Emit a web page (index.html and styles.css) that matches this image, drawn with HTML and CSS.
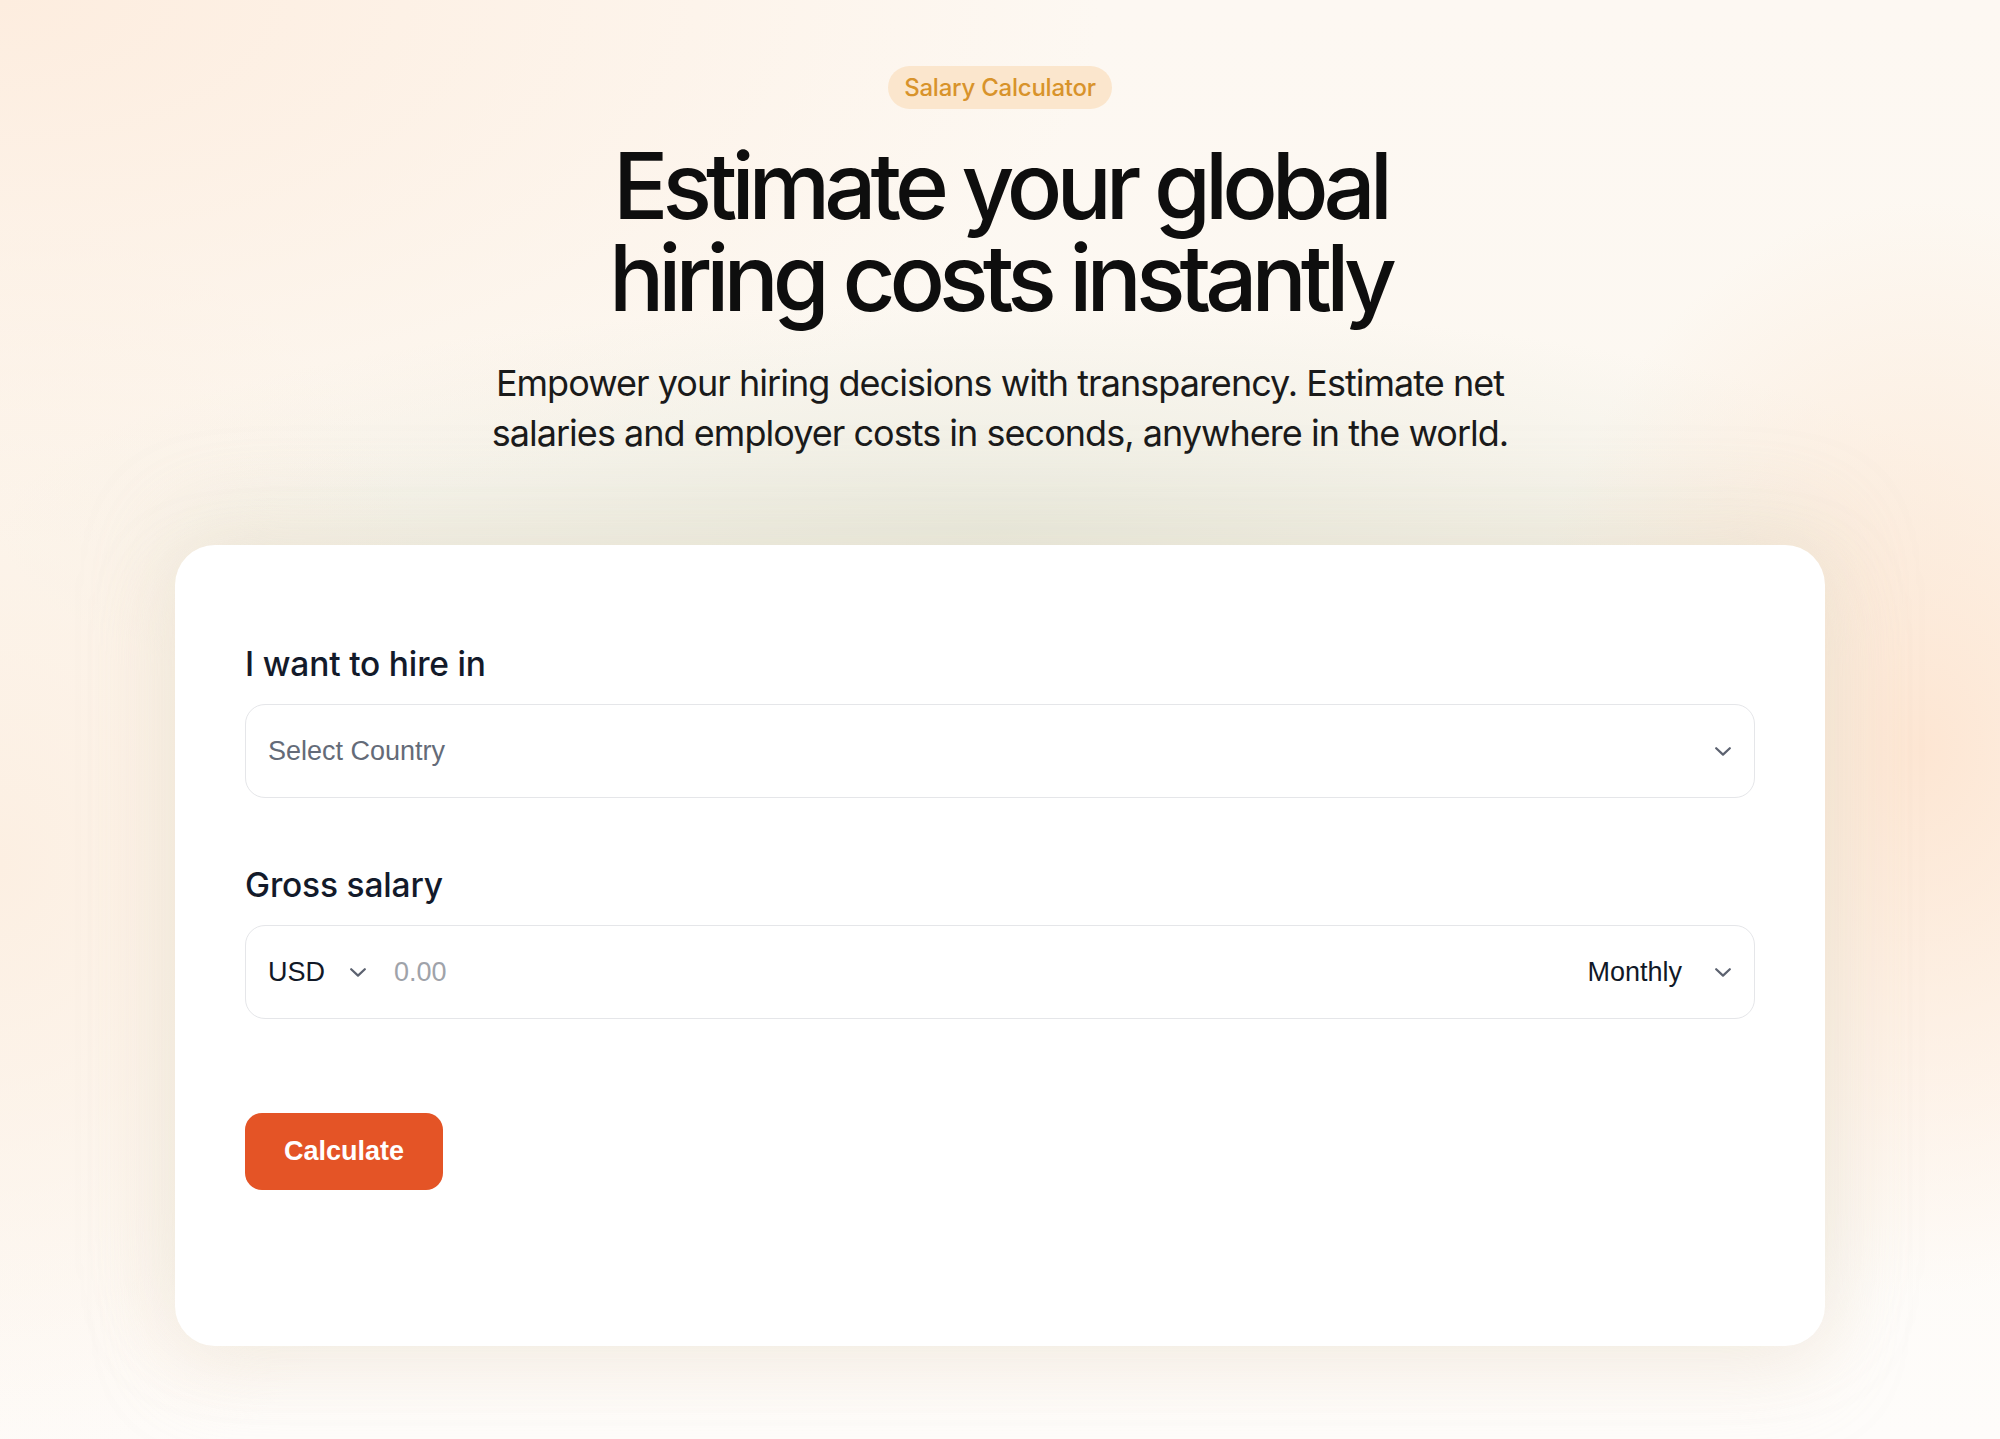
FILE: index.html
```html
<!DOCTYPE html>
<html lang="en">
<head>
<meta charset="utf-8">
<title>Salary Calculator</title>
<link rel="stylesheet" href="styles.css">
</head>
<body>
<main class="page">
  <header class="hero">
    <span class="badge">Salary Calculator</span>
    <h1 class="title">Estimate your global<br>hiring costs instantly</h1>
    <p class="lead">Empower your hiring decisions with transparency. Estimate net<br>salaries and employer costs in seconds, anywhere in the world.</p>
  </header>

  <section class="card">
    <div class="field">
      <div class="label">I want to hire in</div>
      <div class="box">
        <span class="placeholder">Select Country</span>
        <svg class="chev" viewBox="0 0 16 9" width="16" height="9"><path d="M1.2 1.2 L8 7.6 L14.8 1.2" /></svg>
      </div>
    </div>

    <div class="field field-second">
      <div class="label">Gross salary</div>
      <div class="box">
        <span class="value">USD</span>
        <svg class="chev chev-cur" viewBox="0 0 16 9" width="16" height="9"><path d="M1.2 1.2 L8 7.6 L14.8 1.2" /></svg>
        <span class="amount">0.00</span>
        <span class="value period">Monthly</span>
        <svg class="chev" viewBox="0 0 16 9" width="16" height="9"><path d="M1.2 1.2 L8 7.6 L14.8 1.2" /></svg>
      </div>
    </div>

    <button class="btn" type="button">Calculate</button>
  </section>
</main>
</body>
</html>
```

FILE: styles.css
```css
html, body {
  margin: 0;
  padding: 0;
}

body {
  min-height: 1439px;
  font-family: "Inter", "Liberation Sans", sans-serif;
  color: #111;
  background:
    radial-gradient(ellipse 55% 38% at 0% 0%, #fdeddf 0%, rgba(253, 237, 223, 0) 100%),
    radial-gradient(ellipse 20% 38% at 96% 52%, #fde6d3 0%, rgba(253, 230, 211, 0) 100%),
    radial-gradient(ellipse 25% 45% at 0% 60%, #fcefe2 0%, rgba(252, 239, 226, 0) 100%),
    radial-gradient(ellipse 50% 16% at 50% 37%, #ebebdf 0%, rgba(235, 235, 223, 0) 100%),
    linear-gradient(180deg, #fdf8f2 0%, #fcf8f1 40%, #fefcfa 100%);
}

.page {
  display: flex;
  flex-direction: column;
  align-items: center;
  padding-top: 66px;
}

.hero {
  display: flex;
  flex-direction: column;
  align-items: center;
  text-align: center;
}

.badge {
  display: inline-block;
  height: 43px;
  line-height: 43px;
  padding: 0 16px;
  border-radius: 22px;
  background: #fbe6cd;
  color: #d8932b;
  font-size: 24px;
  font-weight: 500;
  letter-spacing: -0.01em;
}

.title {
  margin: 31px 0 0;
  font-size: 92px;
  line-height: 92px;
  font-weight: 500;
  letter-spacing: -0.065em;
  color: #0e0e0e;
}

.lead {
  margin: 34px 0 0;
  font-size: 36px;
  line-height: 50px;
  font-weight: 400;
  letter-spacing: -0.027em;
  color: #1a1a1a;
}

.card {
  box-sizing: border-box;
  width: 1650px;
  margin-top: 87px;
  padding: 99px 70px 156px;
  background: #fff;
  border-radius: 40px;
  box-shadow: 0 -20px 90px rgba(214, 208, 186, 0.35), 0 30px 80px rgba(240, 225, 210, 0.35);
  display: flex;
  flex-direction: column;
  align-items: flex-start;
}

.field {
  width: 100%;
  display: flex;
  flex-direction: column;
  gap: 19px;
}

.field-second {
  margin-top: 67px;
}

.label {
  font-size: 33.5px;
  line-height: 41px;
  font-weight: 500;
  color: #131a2a;
  letter-spacing: -0.005em;
}

.box {
  box-sizing: border-box;
  height: 94px;
  width: 100%;
  border: 1.5px solid #e5e6e9;
  border-radius: 20px;
  padding: 0 23px 0 22px;
  display: flex;
  align-items: center;
  font-family: "Liberation Sans", Arial, sans-serif;
  font-size: 27px;
}

.placeholder {
  flex: 1;
  color: #646b78;
}

.value {
  color: #111827;
}

.amount {
  flex: 1;
  margin-left: 28px;
  color: #9fa3aa;
}

.period {
  margin-right: 33px;
}

.chev {
  width: 16px;
  height: 9px;
  fill: none;
  stroke: #5c6270;
  stroke-width: 2.2;
  stroke-linecap: round;
  stroke-linejoin: round;
}

.chev-cur {
  margin-left: 25px;
}

.btn {
  margin-top: 94px;
  width: 198px;
  height: 77px;
  border: none;
  border-radius: 17px;
  background: #e45426;
  color: #fff;
  font-family: "Liberation Sans", Arial, sans-serif;
  font-size: 27px;
  font-weight: 700;
  cursor: pointer;
}
```
